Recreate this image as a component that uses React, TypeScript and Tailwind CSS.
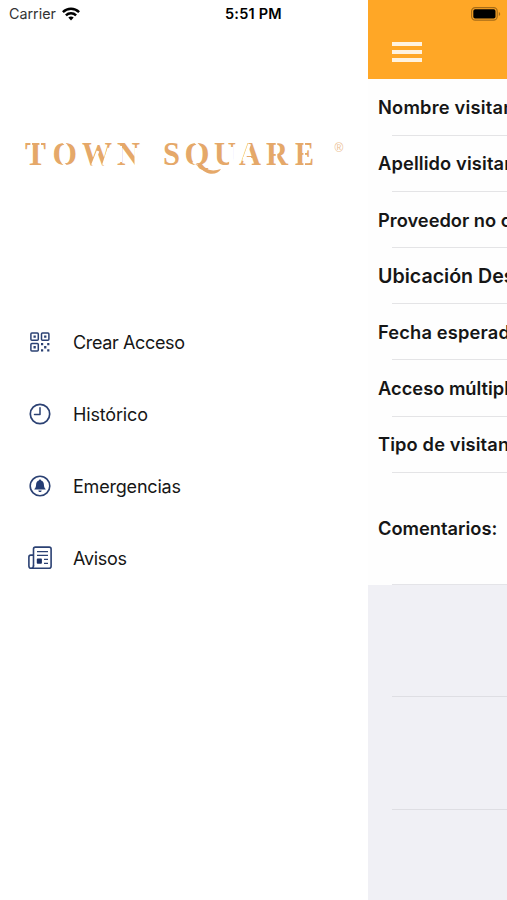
import type { ReactNode } from "react";

type MenuItem = {
  label: string;
  width: number;
  icon: ReactNode;
};

const NAVY = "#2b4173";

const menuItems: MenuItem[] = [
  { label: "Crear Acceso", width: 112, icon: <QrIcon /> },
  { label: "Histórico", width: 75, icon: <ClockIcon /> },
  { label: "Emergencias", width: 108, icon: <BellIcon /> },
  { label: "Avisos", width: 54, icon: <NewsIcon /> },
];

const fields = [
  { label: "Nombre visitan", style: "text-[18.3px] tracking-[0.2px]" },
  { label: "Apellido visitan", style: "text-[18.3px] tracking-[0.12px]" },
  { label: "Proveedor no c", style: "text-[18.3px]" },
  { label: "Ubicación Des", style: "text-[19.6px]" },
  { label: "Fecha esperad", style: "text-[18.3px] tracking-[0.16px]" },
  { label: "Acceso múltipl", style: "text-[18.3px]" },
  { label: "Tipo de visitan", style: "text-[18.3px] tracking-[0.12px]" },
];

const logoLetters = [
  { char: "T", x: 25, width: 21 },
  { char: "O", x: 52.5, width: 24.5 },
  { char: "W", x: 82, width: 30 },
  { char: "N", x: 117, width: 23 },
  { char: "S", x: 163, width: 17 },
  { char: "Q", x: 184.5, width: 25 },
  { char: "U", x: 214, width: 22 },
  { char: "A", x: 239, width: 22 },
  { char: "R", x: 266, width: 22 },
  { char: "E", x: 295, width: 19 },
];

export default function App() {
  return (
    <div className="flex h-[900px] w-[507px] overflow-hidden bg-white font-['Inter',sans-serif] text-[#161616]">
      <Drawer />
      <VisitForm />
    </div>
  );
}

function Drawer() {
  return (
    <aside className="flex w-[368px] shrink-0 flex-col bg-white">
      <div className="flex h-[27px] items-center pl-[9px] text-black">
        <span className="w-[47px] text-[14.3px] text-[#333]">Carrier</span>
        <WifiIcon />
        <span className="ml-[145px] text-[14.5px] font-semibold tracking-[0.2px] whitespace-nowrap">5:51 PM</span>
      </div>
      <div className="pt-[103px]">
        <Logo />
      </div>
      <nav className="mt-[121px] flex flex-col">
        {menuItems.map((item) => (
          <div key={item.label} className="flex h-[72px] items-center pl-[27px]">
            <span className="flex w-[46px]">{item.icon}</span>
            <svg width="140" height="28" className="overflow-visible">
              <text x="0" y="21" fontSize="18" fill="#161616" textLength={item.width}>
                {item.label}
              </text>
            </svg>
          </div>
        ))}
      </nav>
    </aside>
  );
}

function VisitForm() {
  return (
    <main className="flex w-[139px] shrink-0 flex-col overflow-hidden bg-[#f0f0f5]">
      <header className="flex h-[79px] shrink-0 flex-col bg-[#ffa726]">
        <div className="flex h-[27px] items-center pl-[103px]">
          <BatteryIcon />
        </div>
        <div className="ml-6 flex w-[30px] flex-col gap-1 pt-[14.5px]">
          <span className="h-1 bg-[#fff3df]" />
          <span className="h-1 bg-[#fff3df]" />
          <span className="h-1 bg-[#fff3df]" />
        </div>
      </header>
      <div className="bg-[#fefefe] pt-[0.4px]">
        {fields.map((field) => (
          <div key={field.label} className="flex h-[56.2px] flex-col">
            <div className={`flex flex-1 items-center pt-[2px] pl-[10px] font-semibold whitespace-nowrap ${field.style}`}>
              {field.label}
            </div>
            <div className="ml-6 h-px bg-[#e4e4e6]" />
          </div>
        ))}
        <div className="flex h-[112.4px] flex-col">
          <div className="flex flex-1 items-center pt-px pl-[10px] text-[18.3px] font-semibold whitespace-nowrap">
            Comentarios:
          </div>
          <div className="ml-6 h-px bg-[#e4e4e8]" />
        </div>
      </div>
      <div className="ml-6 h-[112.4px] shrink-0 border-b border-[#dedee3]" />
      <div className="ml-6 h-[112.4px] shrink-0 border-b border-[#dedee3]" />
    </main>
  );
}

function Logo() {
  return (
    <svg width="368" height="55" viewBox="0 130 368 55" fill="#e5a869">
      <g fontFamily="Liberation Serif, serif" fontWeight="700" fontSize="33">
        {logoLetters.map((letter) => (
          <text key={letter.char + letter.x} x={letter.x} y="165" textLength={letter.width} lengthAdjust="spacingAndGlyphs">
            {letter.char}
          </text>
        ))}
      </g>
      {/* stencil gaps */}
      <g stroke="#fff" strokeWidth="1.6" fill="none">
        <path d="M31.2 142v8M40.2 142v8" />
        <path d="M62 141l5 5M62 162l5 5" strokeWidth="2.4" />
        <path d="M92.5 165l5.5-14M103.5 165l5.5-17" strokeWidth="2.8" />
        <path d="M120.3 146v16M136.2 148v18" strokeWidth="3.4" />
        <path d="M194 141l5 5M193 162l5 4" strokeWidth="2.2" />
        <path d="M231.2 147v19" strokeWidth="4.2" />
        <path d="M249.5 144l-6 17M243 158.6h8" strokeWidth="3" />
        <path d="M276.5 142v24" />
        <path d="M304.2 142v24" />
      </g>
      {/* long tail of the Q */}
      <path d="M195 164c7 1 10 5 15 6 4 1 7 0 11-1-2 4-7 5.500-12 4.500-6-1.500-9-6.500-14-9.500Z" />
      <text x="334.5" y="152" fontFamily="Liberation Sans, sans-serif" fontSize="12" opacity="0.7">
        ®
      </text>
    </svg>
  );
}

function WifiIcon() {
  return (
    <svg className="ml-[6px]" width="18" height="14" viewBox="0 0 18 14" fill="none" stroke="#000" strokeWidth="2.5">
      <path d="M.9 5.1C5.5.7 12.5.7 17.1 5.1" />
      <path d="M3.9 8.3c2.9-2.8 7.3-2.8 10.2 0" />
      <path d="M6.3 10.5c1.6-1.4 3.8-1.4 5.4 0L9 13.4Z" fill="#000" stroke="none" />
    </svg>
  );
}

function BatteryIcon() {
  return (
    <svg width="30" height="14" viewBox="0 0 30 14">
      <rect x=".6" y=".6" width="25.6" height="12.6" rx="3.6" fill="none" stroke="#a66c18" strokeWidth="1.2" />
      <rect x="2.3" y="2.3" width="22.2" height="9.2" rx="1.8" fill="#000" />
      <path d="M27.8 5v4c1.9-.7 1.9-3.3 0-4Z" fill="#a66c18" />
    </svg>
  );
}

function QrIcon() {
  return (
    <svg className="ml-[3px]" width="20" height="20" viewBox="0 0 20 20" fill={NAVY}>
      <g fill="none" stroke={NAVY} strokeWidth="1.5">
        <rect x=".9" y=".9" width="7.4" height="7.4" rx="1" />
        <rect x="11.5" y=".9" width="7.4" height="7.4" rx="1" />
        <rect x=".9" y="11.5" width="7.4" height="7.4" rx="1" />
      </g>
      <path d="M3.5 3.5h2.3v2.3H3.5zM14.1 3.5h2.3v2.3h-2.3zM3.5 14.1h2.3v2.3H3.5z" />
      <path d="M11 11h2.2v2.2H11zM17.2 11h2.2v2.2h-2.2zM14.1 14.1h2.3v2.3h-2.3zM11 17.2h2.2v2.2H11zM17.2 17.2h2.2v2.2h-2.2z" />
    </svg>
  );
}

function ClockIcon() {
  return (
    <svg className="ml-[2px]" width="22" height="22" viewBox="0 0 22 22" fill="none" stroke={NAVY} strokeWidth="1.7">
      <circle cx="11" cy="11" r="9.7" />
      <path d="M11 4.7V11.5H5.5" strokeLinecap="round" strokeLinejoin="round" strokeWidth="1.5" />
    </svg>
  );
}

function BellIcon() {
  return (
    <svg className="ml-[2px]" width="22" height="22" viewBox="0 0 22 22" fill="#243c73">
      <circle cx="11" cy="11" r="9.8" fill="none" stroke={NAVY} strokeWidth="1.6" />
      <path d="M11 4.4c.7 0 1.1.5 1.1 1.1 1.8.5 2.7 2 2.8 4 .1 2.5.6 3.5 1.7 4.5v.6H5.4V14c1.1-1 1.6-2 1.7-4.5.1-2 1-3.5 2.8-4 0-.6.4-1.1 1.1-1.1Z" />
      <path d="M9.3 15.4h3.4c-.2 1-.8 1.5-1.7 1.5s-1.5-.5-1.7-1.5Z" />
    </svg>
  );
}

function NewsIcon() {
  return (
    <svg width="26" height="24" viewBox="0 0 26 24" fill="none" stroke={NAVY} strokeWidth="1.6">
      <path d="M6.5 20.2V3c0-1.2.7-1.9 1.9-1.9h13.8c1.2 0 1.9.7 1.9 1.9v17.2c0 1.2-.8 2-2 2H4.2c-1.4 0-2.3-.9-2.3-2.3V11c0-1.2.7-1.9 1.9-1.9h2.7" />
      <path d="M6.5 19.5c0 1.8-.7 2.7-2.1 2.7" />
      <path d="M10 5.6h11M10 9.3h11M17 13.3h4M17 17.3h4" strokeWidth="1.2" />
      <rect x="9.8" y="12.6" width="5.1" height="5.1" rx=".8" fill="#1b2f63" stroke="none" />
    </svg>
  );
}
